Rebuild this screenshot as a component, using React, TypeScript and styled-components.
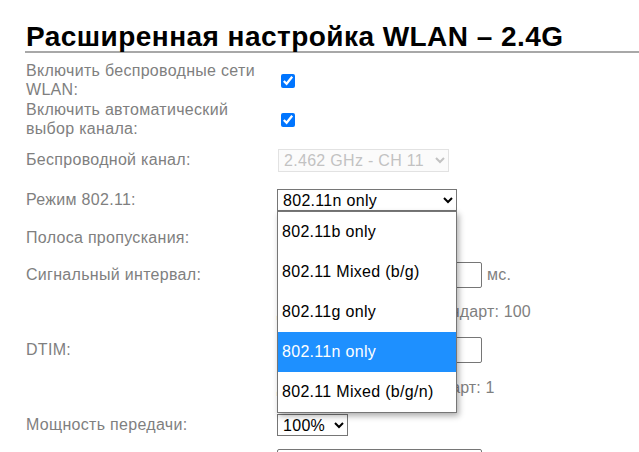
import React from 'react';
import styled, { createGlobalStyle } from 'styled-components';

const Global = createGlobalStyle`
  html, body {
    margin: 0;
    padding: 0;
    background: #fff;
  }
  body {
    font-family: "Liberation Sans", Arial, sans-serif;
    font-size: 16px;
    letter-spacing: 0.3px;
    overflow: hidden;
  }
`;

const Page = styled.div`
  padding-left: 25px;
  height: 452px;
  overflow: hidden;
`;

const Title = styled.h1`
  margin: 0;
  padding: 22px 0 0 1px;
  font-size: 28px;
  line-height: 29px;
  font-weight: bold;
  letter-spacing: 0.45px;
  color: #000;
  border-bottom: 2px solid #a8a8a8;
`;

const Form = styled.div`
  margin-top: 8px;
  display: flex;
  flex-direction: column;
`;

const Row = styled.div<{ $h: number }>`
  display: grid;
  grid-template-columns: 252px 1fr;
  align-items: center;
  height: ${(p) => p.$h}px;
`;

const Label = styled.div`
  color: #7f7f7f;
  line-height: 18.5px;
  padding-left: 1px;
`;

const Cell = styled.div`
  position: relative;
  display: flex;
  align-items: center;
  color: #7f7f7f;
`;

const Check = styled.input.attrs({ type: 'checkbox' })`
  width: 14px;
  height: 14px;
  margin: 0 0 0 4px;
  accent-color: #0075ff;
`;

const Select = styled.select<{ $w: number }>`
  width: ${(p) => p.$w}px;
  height: 22px;
  margin: 0;
  font-family: "Liberation Sans", Arial, sans-serif;
  font-size: 16px;
  letter-spacing: 0.3px;
  color: #000;
  background: #fff;
  border: 1px solid #767676;
  border-radius: 0;
  padding: 0 2px 0 1px;

  &:disabled {
    height: 23px;
    margin-left: 1px;
    color: #a9a9a9;
    border-color: #d6d6d6;
    background: #fafafa;
  }
`;

const TextBox = styled.input.attrs({ type: 'text' })`
  box-sizing: border-box;
  width: 205px;
  height: 26px;
  margin: 0;
  border: 1px solid #767676;
  border-radius: 2px;
  font-family: "Liberation Sans", Arial, sans-serif;
  font-size: 16px;
`;

const Unit = styled.span`
  margin-left: 5px;
  color: #7f7f7f;
`;

const Hint = styled.span`
  color: #7f7f7f;
  white-space: nowrap;
  letter-spacing: 0.15px;
`;

const Menu = styled.ul`
  position: absolute;
  top: 100%;
  left: 0;
  z-index: 10;
  box-sizing: border-box;
  width: 180px;
  margin: 0;
  padding: 0;
  list-style: none;
  background: #fff;
  border: 1px solid #767676;
  box-shadow: 2px 3px 6px rgba(0, 0, 0, 0.32);
`;

const Option = styled.li<{ $active?: boolean }>`
  height: 40px;
  line-height: 40px;
  padding-left: 4px;
  font-size: 16px;
  color: ${(p) => (p.$active ? '#fff' : '#000')};
  background: ${(p) => (p.$active ? '#1e90ff' : 'transparent')};
`;

const modes = [
  '802.11b only',
  '802.11 Mixed (b/g)',
  '802.11g only',
  '802.11n only',
  '802.11 Mixed (b/g/n)',
];

export default function App() {
  return (
    <Page>
      <Global />
      <Title>Расширенная настройка WLAN – 2.4G</Title>
      <Form>
        <Row $h={39}>
          <Label>
            Включить беспроводные сети
            <br />
            WLAN:
          </Label>
          <Cell>
            <Check defaultChecked />
          </Cell>
        </Row>
        <Row $h={39}>
          <Label>
            Включить автоматический
            <br />
            выбор канала:
          </Label>
          <Cell>
            <Check defaultChecked />
          </Cell>
        </Row>
        <Row $h={42}>
          <Label>Беспроводной канал:</Label>
          <Cell>
            <Select $w={171} disabled defaultValue="11">
              <option value="11">2.462 GHz - CH 11</option>
            </Select>
          </Cell>
        </Row>
        <Row $h={38}>
          <Label>Режим 802.11:</Label>
          <Cell>
            <Select $w={180} defaultValue="n">
              <option value="n">802.11n only</option>
            </Select>
            <Menu>
              {modes.map((m) => (
                <Option key={m} $active={m === '802.11n only'}>
                  {m}
                </Option>
              ))}
            </Menu>
          </Cell>
        </Row>
        <Row $h={38}>
          <Label>Полоса пропускания:</Label>
          <Cell>
            <Select $w={100} defaultValue="20">
              <option value="20">20 MHz</option>
            </Select>
          </Cell>
        </Row>
        <Row $h={36}>
          <Label>Сигнальный интервал:</Label>
          <Cell>
            <TextBox defaultValue="" />
            <Unit>мс.</Unit>
          </Cell>
        </Row>
        <Row $h={38}>
          <Label />
          <Cell>
            <Hint>Диапазон 20-1000, Стандарт: 100</Hint>
          </Cell>
        </Row>
        <Row $h={38}>
          <Label>DTIM:</Label>
          <Cell>
            <TextBox defaultValue="" />
          </Cell>
        </Row>
        <Row $h={38}>
          <Label />
          <Cell>
            <Hint>Диапазон 1-255, Стандарт: 1</Hint>
          </Cell>
        </Row>
        <Row $h={36}>
          <Label>Мощность передачи:</Label>
          <Cell>
            <Select $w={71} defaultValue="100">
              <option value="100">100%</option>
            </Select>
          </Cell>
        </Row>
        <Row $h={38}>
          <Label />
          <Cell>
            <TextBox defaultValue="" />
          </Cell>
        </Row>
      </Form>
    </Page>
  );
}
